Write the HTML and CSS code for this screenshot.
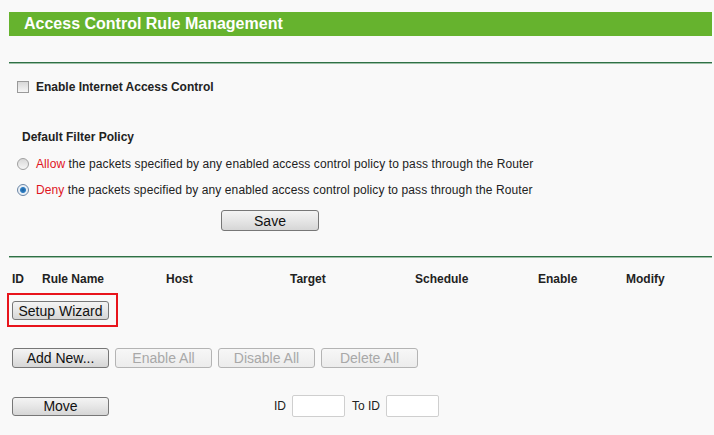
FILE: index.html
```html
<!DOCTYPE html>
<html lang="en">
<head>
  <meta charset="UTF-8">
  <title>Access Control Rule Management</title>
  <link rel="stylesheet" href="styles.css">
</head>
<body>
  <div class="page">
    <div class="title">Access Control Rule Management</div>
    <div class="rule"></div>

    <label class="check-row">
      <input type="checkbox" class="box">
      <span>Enable Internet Access Control</span>
    </label>

    <div class="policy-title">Default Filter Policy</div>
    <label class="radio-row first">
      <input type="radio" name="policy" class="dot">
      <span><em>Allow</em> the packets specified by any enabled access control policy to pass through the Router</span>
    </label>
    <label class="radio-row">
      <input type="radio" name="policy" class="dot" checked>
      <span><em>Deny</em> the packets specified by any enabled access control policy to pass through the Router</span>
    </label>

    <div class="save-row">
      <button class="btn">Save</button>
    </div>

    <div class="rule second"></div>

    <div class="rule-head">
      <span>ID</span>
      <span>Rule Name</span>
      <span>Host</span>
      <span>Target</span>
      <span>Schedule</span>
      <span>Enable</span>
      <span>Modify</span>
    </div>

    <div class="wizard">
      <button class="btn">Setup Wizard</button>
    </div>

    <div class="actions">
      <button class="btn">Add New...</button>
      <button class="btn" disabled>Enable All</button>
      <button class="btn" disabled>Disable All</button>
      <button class="btn" disabled>Delete All</button>
    </div>

    <div class="move-row">
      <button class="btn">Move</button>
      <div class="move-fields">
        <span>ID</span>
        <input type="text" class="field">
        <span>To ID</span>
        <input type="text" class="field">
      </div>
    </div>
  </div>
</body>
</html>
```

FILE: styles.css
```css
body {
  margin: 0;
  background-color: #f9f9f9;
  color: #222;
  font-family: "Liberation Sans", Arial, sans-serif;
  font-size: 12px;
}
.page {
  padding: 12px 2px 0 9px;
}
.title {
  height: 24px;
  line-height: 24px;
  padding-left: 15px;
  background-color: #66b32e;
  color: #fff;
  font-size: 16px;
  font-weight: bold;
}
.rule {
  margin-top: 26px;
  border-top: 1px solid #2f7046;
  height: 1px;
  background-color: #9fc0a8;
}
.rule.second {
  margin-top: 25px;
}
.check-row {
  display: flex;
  align-items: center;
  height: 20px;
  margin-top: 13px;
  padding-left: 8px;
  font-weight: bold;
}
.policy-title {
  height: 20px;
  line-height: 20px;
  margin-top: 30px;
  padding-left: 13px;
  font-weight: bold;
}
.radio-row {
  display: flex;
  align-items: center;
  height: 20px;
  margin-top: 6px;
  padding-left: 8px;
  letter-spacing: 0.1px;
}
.radio-row.first {
  margin-top: 7px;
}
.radio-row em {
  font-style: normal;
  color: #e0141e;
}
.box, .dot {
  appearance: none;
  margin: 0 7px 0 0;
  width: 12px;
  height: 12px;
  border: 1px solid #9a9a9a;
  background: linear-gradient(#d8d8d8, #f6f6f6);
}
.dot {
  border-radius: 50%;
  border-color: #a0a0a0;
}
.dot:checked {
  background: radial-gradient(circle, #1d5f9c 0, #2f7fc4 2.5px, #e6eef6 3.5px, #f4f4f4 100%);
  border-color: #6b86a6;
}
.save-row {
  margin-top: 10px;
  padding-left: 212px;
}
.btn {
  width: 97px;
  height: 20px;
  padding: 0;
  border: 1px solid #777;
  border-radius: 3px;
  background: linear-gradient(#f4f4f4, #e6e6e6 50%, #d6d6d6);
  color: #111;
  font-family: "Liberation Sans", Arial, sans-serif;
  font-size: 14px;
}
.save-row .btn {
  width: 98px;
  height: 21px;
}
.btn:disabled {
  border-color: #b4b4b4;
  background: linear-gradient(#f7f7f7, #ececec);
  color: #a8a8a8;
}
.rule-head {
  display: grid;
  grid-template-columns: 30px 124px 124px 125px 123px 88px 1fr;
  height: 20px;
  line-height: 20px;
  margin-top: 11px;
  padding-left: 3px;
  font-weight: bold;
}
.wizard {
  display: inline-block;
  margin: 4px 0 0 -2px;
  padding: 6px 7px 5px 3px;
  border: 2px solid #e8141c;
}
.wizard .btn {
  height: 19px;
}
.actions {
  display: flex;
  gap: 6px;
  margin-top: 21px;
  padding-left: 3px;
}
.move-row {
  display: flex;
  align-items: center;
  margin-top: 27px;
  padding-left: 3px;
}
.move-row .btn {
  height: 19px;
}
.move-fields {
  display: flex;
  align-items: center;
  margin-left: 165px;
}
.field {
  box-sizing: border-box;
  width: 53px;
  height: 22px;
  padding: 0;
  margin: 0 7px 0 6px;
  border: 1px solid #cfcfcf;
  border-radius: 2px;
  background-color: #fff;
}
```
